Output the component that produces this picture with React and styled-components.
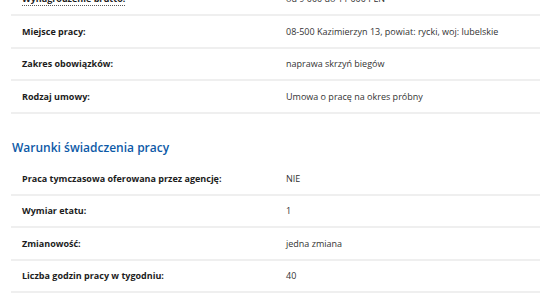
import React from "react";
import styled, { createGlobalStyle } from "styled-components";

const GlobalStyle = createGlobalStyle`
  html, body {
    margin: 0;
    padding: 0;
    background: #fff;
  }
  body {
    font-family: "Open Sans", "Noto Sans", sans-serif;
    color: #222;
    overflow: hidden;
  }
`;

const Page = styled.div`
  width: 540px;
  height: 304px;
  overflow: hidden;
`;

const Content = styled.div`
  margin-top: -16.5px;
  padding-left: 11px;
`;

const Table = styled.div`
  display: grid;
  grid-template-columns: 264px 1fr;
`;

const Cell = styled.div`
  display: flex;
  align-items: center;
  height: 30.5px;
  padding-left: 11px;
  border-bottom: 2px solid #efefef;
  font-size: 9px;
  font-weight: ${(p) => (p.$label ? 700 : 400)};
  color: ${(p) => (p.$label ? "#1c1c1c" : "#333")};
  white-space: nowrap;
`;

const Abbr = styled.span`
  border-bottom: 1px dotted #555;
`;

const Heading = styled.h2`
  margin: 0;
  padding: 25px 0 6.5px 1px;
  font-size: 12px;
  font-weight: 600;
  color: #0d5aa7;
  line-height: 18px;
`;

const details = [
  { label: <Abbr>Wynagrodzenie brutto:</Abbr>, value: "od 9 000 do 11 000 PLN" },
  { label: "Miejsce pracy:", value: "08-500 Kazimierzyn 13, powiat: rycki, woj: lubelskie" },
  { label: "Zakres obowiązków:", value: "naprawa skrzyń biegów" },
  { label: "Rodzaj umowy:", value: "Umowa o pracę na okres próbny" },
];

const conditions = [
  { label: "Praca tymczasowa oferowana przez agencję:", value: "NIE" },
  { label: "Wymiar etatu:", value: "1" },
  { label: "Zmianowość:", value: "jedna zmiana" },
  { label: "Liczba godzin pracy w tygodniu:", value: "40" },
];

function InfoTable({ rows }) {
  return (
    <Table>
      {rows.map((row, i) => (
        <React.Fragment key={i}>
          <Cell $label>{row.label}</Cell>
          <Cell>{row.value}</Cell>
        </React.Fragment>
      ))}
    </Table>
  );
}

export default function App() {
  return (
    <Page>
      <GlobalStyle />
      <Content>
        <InfoTable rows={details} />
        <Heading>Warunki świadczenia pracy</Heading>
        <InfoTable rows={conditions} />
      </Content>
    </Page>
  );
}
